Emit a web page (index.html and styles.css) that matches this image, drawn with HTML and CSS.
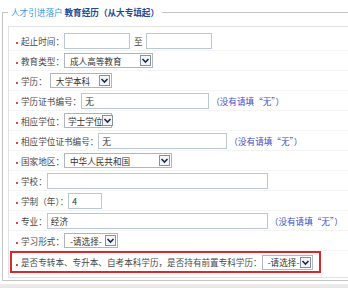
FILE: index.html
```html
<!DOCTYPE html>
<html lang="zh-CN">
<head>
  <meta charset="UTF-8">
  <meta name="viewport" content="width=device-width, initial-scale=1.0">
  <title>教育经历</title>
  <link rel="stylesheet" href="styles.css">
</head>
<body>
  <fieldset class="edu">
    <legend><span class="lg-a">人才引进落户</span> <span class="lg-b">教育经历（从大专填起）</span></legend>
    <div class="form">
      <div class="row">
        <span class="req">起止时间：</span>
        <input class="txt w66" type="text" value="">
        <span class="to">至</span>
        <input class="txt w66" type="text" value="">
      </div>
      <div class="row">
        <span class="req">教育类型：</span>
        <span class="sel w89"><span class="val">成人高等教育</span><span class="arr"><svg viewBox="0 0 9 9"><path d="M1.5 3 L4.5 6 L7.5 3"/></svg></span></span>
      </div>
      <div class="row">
        <span class="req">学历：</span>
        <span class="sel w62 gap"><span class="val">大学本科</span><span class="arr"><svg viewBox="0 0 9 9"><path d="M1.5 3 L4.5 6 L7.5 3"/></svg></span></span>
      </div>
      <div class="row">
        <span class="req">学历证书编号：</span>
        <input class="txt w128" type="text" value="无">
        <span class="hint">（没有请填“无”）</span>
      </div>
      <div class="row">
        <span class="req">相应学位：</span>
        <span class="sel w48 tight"><span class="val">学士学位</span><span class="arr"><svg viewBox="0 0 9 9"><path d="M1.5 3 L4.5 6 L7.5 3"/></svg></span></span>
      </div>
      <div class="row">
        <span class="req">相应学位证书编号：</span>
        <input class="txt w129" type="text" value="无">
        <span class="hint">（没有请填“无”）</span>
      </div>
      <div class="row">
        <span class="req">国家地区：</span>
        <span class="sel w108"><span class="val">中华人民共和国</span><span class="arr"><svg viewBox="0 0 9 9"><path d="M1.5 3 L4.5 6 L7.5 3"/></svg></span></span>
      </div>
      <div class="row">
        <span class="req">学校：</span>
        <input class="txt w221" type="text" value="">
      </div>
      <div class="row">
        <span class="req">学制（年）：</span>
        <input class="txt w34" type="text" value="4">
      </div>
      <div class="row">
        <span class="req">专业：</span>
        <input class="txt w221" type="text" value="经济">
        <span class="hint">（没有请填“无”）</span>
      </div>
      <div class="row">
        <span class="req">学习形式：</span>
        <span class="sel w54"><span class="val">-请选择-</span><span class="arr"><svg viewBox="0 0 9 9"><path d="M1.5 3 L4.5 6 L7.5 3"/></svg></span></span>
      </div>
      <div class="row mark">
        <span class="req">是否专转本、专升本、自考本科学历，是否持有前置专科学历：</span>
        <span class="sel w51"><span class="val">-请选择-</span><span class="arr"><svg viewBox="0 0 9 9"><path d="M1.5 3 L4.5 6 L7.5 3"/></svg></span></span>
      </div>
    </div>
  </fieldset>
  <div class="foot"></div>
</body>
</html>
```

FILE: styles.css
```css
html, body {
  overflow: hidden;
}
body {
  margin: 0;
  background: #fff;
  font-family: "Noto Sans CJK SC", "Microsoft YaHei", sans-serif;
  font-size: 8.6px;
  color: #4a4a4a;
}
.edu {
  margin: 5px 0 0 2px;
  padding: 0 0 2px 5px;
  border: 1px solid #c4c4c4;
  border-right: none;
  min-width: 0;
}
.edu legend {
  padding: 0 3px;
  line-height: 14px;
}
.lg-a {
  color: #3a9be0;
}
.lg-b {
  color: #1d4a96;
  font-weight: bold;
}
.form {
  margin-top: 7px;
  border: 1px solid #e2e2e2;
  border-right: none;
  padding: 4px 0;
}
.row {
  height: 20px;
  box-sizing: border-box;
  display: flex;
  align-items: center;
  padding-left: 7px;
  border-bottom: 1px solid #f4f4f4;
  white-space: nowrap;
}
.req::before {
  content: "";
  display: inline-block;
  width: 2px;
  height: 2px;
  background: #e0474a;
  margin-right: 3px;
  vertical-align: middle;
  position: relative;
  top: 1px;
}
.txt {
  box-sizing: border-box;
  height: 16px;
  margin: 0;
  padding: 0 3px;
  border: 1px solid #b9c7d6;
  background: #fff;
  font: inherit;
  color: #333;
  outline: none;
}
.to {
  margin: 0 3px 0 4px;
}
.hint {
  color: #3b4ccc;
  margin-left: 2px;
}
.sel {
  box-sizing: border-box;
  display: inline-flex;
  align-items: center;
  height: 15px;
  border: 1px solid #aeb6bf;
  background: #fff;
  color: #333;
}
.sel .val {
  flex: 1;
  padding-left: 5px;
}
.sel .arr {
  box-sizing: border-box;
  flex: none;
  width: 11px;
  height: 11px;
  margin-right: 1px;
  border: 1px solid #8592a0;
  background: #f3f5f8;
  display: flex;
  align-items: center;
  justify-content: center;
}
.sel svg {
  width: 9px;
  height: 9px;
  fill: none;
  stroke: #1c2a4a;
  stroke-width: 1.6;
}
.tight .val {
  padding-left: 3px;
}
.gap { margin-left: 3px; }
.w34 { width: 34px; }
.w48 { width: 48px; }
.w51 { width: 51px; }
.w54 { width: 54px; }
.w62 { width: 62px; }
.w66 { width: 66px; }
.w89 { width: 89px; }
.w108 { width: 108px; }
.w128 { width: 128px; }
.w129 { width: 129px; }
.w221 { width: 221px; }
.mark {
  height: 22px;
  width: 311px;
  margin-left: 1px;
  padding-left: 4px;
  border: 2px solid #d8282d;
}
.foot {
  margin-top: 3px;
  height: 10px;
  background: linear-gradient(#ececec, #dedede);
}
```
